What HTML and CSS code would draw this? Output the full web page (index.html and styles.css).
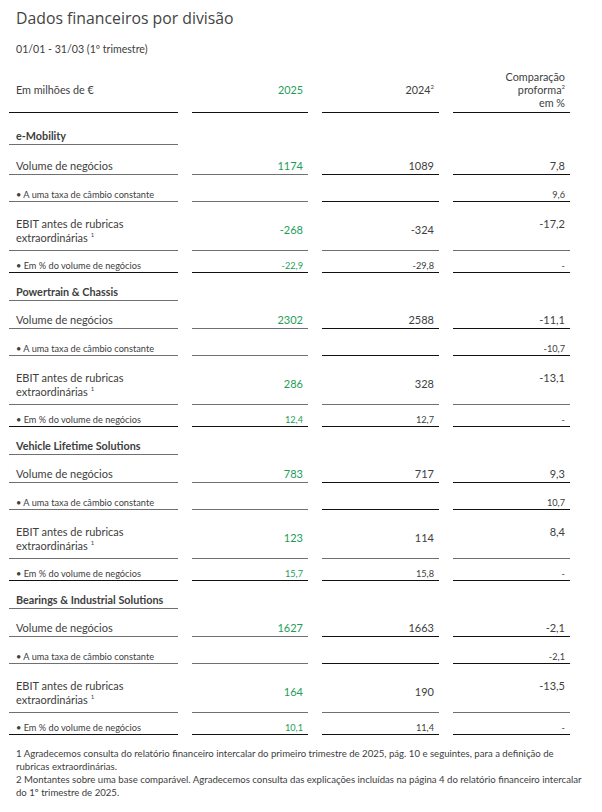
FILE: index.html
```html
<!DOCTYPE html>
<html lang="pt">
<head>
<meta charset="utf-8">
<title>Dados financeiros por divisão</title>
<link rel="stylesheet" href="styles.css">
</head>
<body>
<div class="page">
  <h1 class="title">Dados financeiros por divisão</h1>
  <p class="period">01/01 - 31/03 (1º trimestre)</p>

  <div class="table">
    <div class="row r-head">
      <div class="cell c-label bk"><span class="mid">Em milhões de €</span></div>
      <div class="cell c-num bk green"><span class="mid">2025</span></div>
      <div class="cell c-num bk"><span class="mid">2024<sup>2</sup></span></div>
      <div class="cell c-num bk"><span>Comparação<br>proforma<sup>2</sup><br>em %</span></div>
    </div>

    <!-- e-Mobility -->
    <div class="row r-sec first">
      <div class="cell c-label gr sec"><span>e-Mobility</span></div>
      <div class="cell"></div><div class="cell"></div><div class="cell"></div>
    </div>
    <div class="row r-vol first">
      <div class="cell c-label gr"><span>Volume de negócios</span></div>
      <div class="cell c-num gr green"><span>1174</span></div>
      <div class="cell c-num bk"><span>1089</span></div>
      <div class="cell c-num bk"><span>7,8</span></div>
    </div>
    <div class="row r-fx">
      <div class="cell c-label gr small"><span>• A uma taxa de câmbio constante</span></div>
      <div class="cell c-num gr small"></div>
      <div class="cell c-num bk small"></div>
      <div class="cell c-num bk small"><span>9,6</span></div>
    </div>
    <div class="row r-ebit">
      <div class="cell c-label gr top"><span>EBIT antes de rubricas<br>extraordinárias <sup>1</sup></span></div>
      <div class="cell c-num gr green low"><span>-268</span></div>
      <div class="cell c-num gr low"><span>-324</span></div>
      <div class="cell c-num gr top"><span>-17,2</span></div>
    </div>
    <div class="row r-pct">
      <div class="cell c-label bk small"><span>• Em % do volume de negócios</span></div>
      <div class="cell c-num bk small green"><span>-22,9</span></div>
      <div class="cell c-num bk small"><span>-29,8</span></div>
      <div class="cell c-num bk small"><span>-</span></div>
    </div>

    <!-- Powertrain & Chassis -->
    <div class="row r-sec">
      <div class="cell c-label gr sec"><span>Powertrain &amp; Chassis</span></div>
      <div class="cell"></div><div class="cell"></div><div class="cell"></div>
    </div>
    <div class="row r-vol">
      <div class="cell c-label gr"><span>Volume de negócios</span></div>
      <div class="cell c-num gr green"><span>2302</span></div>
      <div class="cell c-num bk"><span>2588</span></div>
      <div class="cell c-num bk"><span>-11,1</span></div>
    </div>
    <div class="row r-fx">
      <div class="cell c-label gr small"><span>• A uma taxa de câmbio constante</span></div>
      <div class="cell c-num gr small"></div>
      <div class="cell c-num bk small"></div>
      <div class="cell c-num bk small"><span>-10,7</span></div>
    </div>
    <div class="row r-ebit">
      <div class="cell c-label gr top"><span>EBIT antes de rubricas<br>extraordinárias <sup>1</sup></span></div>
      <div class="cell c-num gr green low"><span>286</span></div>
      <div class="cell c-num gr low"><span>328</span></div>
      <div class="cell c-num gr top"><span>-13,1</span></div>
    </div>
    <div class="row r-pct">
      <div class="cell c-label bk small"><span>• Em % do volume de negócios</span></div>
      <div class="cell c-num bk small green"><span>12,4</span></div>
      <div class="cell c-num bk small"><span>12,7</span></div>
      <div class="cell c-num bk small"><span>-</span></div>
    </div>

    <!-- Vehicle Lifetime Solutions -->
    <div class="row r-sec">
      <div class="cell c-label gr sec"><span>Vehicle Lifetime Solutions</span></div>
      <div class="cell"></div><div class="cell"></div><div class="cell"></div>
    </div>
    <div class="row r-vol">
      <div class="cell c-label gr"><span>Volume de negócios</span></div>
      <div class="cell c-num gr green"><span>783</span></div>
      <div class="cell c-num bk"><span>717</span></div>
      <div class="cell c-num bk"><span>9,3</span></div>
    </div>
    <div class="row r-fx">
      <div class="cell c-label gr small"><span>• A uma taxa de câmbio constante</span></div>
      <div class="cell c-num gr small"></div>
      <div class="cell c-num bk small"></div>
      <div class="cell c-num bk small"><span>10,7</span></div>
    </div>
    <div class="row r-ebit">
      <div class="cell c-label gr top"><span>EBIT antes de rubricas<br>extraordinárias <sup>1</sup></span></div>
      <div class="cell c-num gr green low"><span>123</span></div>
      <div class="cell c-num gr low"><span>114</span></div>
      <div class="cell c-num gr top"><span>8,4</span></div>
    </div>
    <div class="row r-pct">
      <div class="cell c-label bk small"><span>• Em % do volume de negócios</span></div>
      <div class="cell c-num bk small green"><span>15,7</span></div>
      <div class="cell c-num bk small"><span>15,8</span></div>
      <div class="cell c-num bk small"><span>-</span></div>
    </div>

    <!-- Bearings & Industrial Solutions -->
    <div class="row r-sec">
      <div class="cell c-label gr sec"><span>Bearings &amp; Industrial Solutions</span></div>
      <div class="cell"></div><div class="cell"></div><div class="cell"></div>
    </div>
    <div class="row r-vol">
      <div class="cell c-label gr"><span>Volume de negócios</span></div>
      <div class="cell c-num gr green"><span>1627</span></div>
      <div class="cell c-num bk"><span>1663</span></div>
      <div class="cell c-num bk"><span>-2,1</span></div>
    </div>
    <div class="row r-fx">
      <div class="cell c-label gr small"><span>• A uma taxa de câmbio constante</span></div>
      <div class="cell c-num gr small"></div>
      <div class="cell c-num bk small"></div>
      <div class="cell c-num bk small"><span>-2,1</span></div>
    </div>
    <div class="row r-ebit">
      <div class="cell c-label gr top"><span>EBIT antes de rubricas<br>extraordinárias <sup>1</sup></span></div>
      <div class="cell c-num gr green low"><span>164</span></div>
      <div class="cell c-num gr low"><span>190</span></div>
      <div class="cell c-num gr top"><span>-13,5</span></div>
    </div>
    <div class="row r-pct">
      <div class="cell c-label bk small"><span>• Em % do volume de negócios</span></div>
      <div class="cell c-num bk small green"><span>10,1</span></div>
      <div class="cell c-num bk small"><span>11,4</span></div>
      <div class="cell c-num bk small"><span>-</span></div>
    </div>
  </div>

  <div class="notes">
    <p>1 Agradecemos consulta do relatório financeiro intercalar do primeiro trimestre de 2025, pág. 10 e seguintes, para a definição de<br>rubricas extraordinárias.</p>
    <p>2 Montantes sobre uma base comparável. Agradecemos consulta das explicações incluídas na página 4 do relatório financeiro intercalar<br>do 1º trimestre de 2025.</p>
  </div>
</div>
</body>
</html>
```

FILE: styles.css
```css
html, body {
  margin: 0;
  padding: 0;
  background: #ffffff;
}

body {
  font-family: Lato, "Noto Sans", sans-serif;
  color: #404040;
}

.page {
  width: 602px;
  padding-top: 6px;
}

.title {
  margin: 0 0 0 16px;
  font-family: "Open Sans", "Noto Sans", sans-serif;
  font-weight: 400;
  font-size: 15.8px;
  line-height: 24px;
  color: #444444;
}

.period {
  margin: 12px 0 0 16px;
  font-size: 10.6px;
  line-height: 14px;
  color: #404040;
}

.table {
  margin-top: 7px;
  margin-left: 9px;
}

.row {
  display: grid;
  grid-template-columns: 169px 116px 117px 117px;
  column-gap: 14px;
}

.cell {
  display: flex;
  flex-direction: column;
  justify-content: flex-end;
  padding: 0 6px 1px 7px;
  font-size: 11px;
  line-height: 14px;
  box-sizing: border-box;
  white-space: nowrap;
}

.c-num {
  align-items: flex-end;
  text-align: right;
  padding-right: 5px;
}

.gr { border-bottom: 1px solid #707070; }
.bk { border-bottom: 1px solid #111111; }

.green { color: #1e9d57; }

.small {
  font-size: 9.2px;
  line-height: 11px;
  padding-bottom: 1px;
}

.sec {
  font-weight: 700;
  font-size: 10.8px;
}

sup {
  font-size: 6px;
  line-height: 0;
  vertical-align: 5px;
}

/* header row */
.r-head { height: 50px; }
.r-head .cell {
  font-size: 10.8px;
  line-height: 13px;
  padding-bottom: 3px;
}
.r-head .mid {
  display: block;
  padding-bottom: 13px;
}

/* row heights */
.r-sec { height: 28px; }
.r-sec.first { height: 32px; }
.r-vol { height: 28px; }
.r-vol.first { height: 30px; }
.r-fx { height: 27px; }
.r-ebit { height: 49px; }
.r-pct { height: 22px; }

.r-ebit .top {
  justify-content: flex-start;
  padding-top: 15px;
}
.r-ebit .low {
  justify-content: flex-start;
  padding-top: 21px;
}

.notes {
  margin: 12px 0 0 16px;
  width: 584px;
  font-size: 9.6px;
  line-height: 13px;
  color: #404040;
  white-space: nowrap;
}

.notes p {
  margin: 0;
}
```
